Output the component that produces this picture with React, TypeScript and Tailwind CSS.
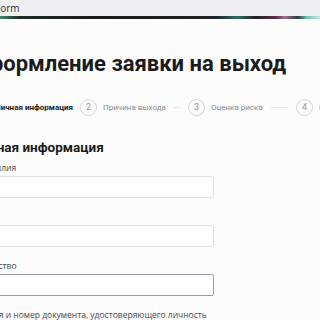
import React from "react";

const steps = [
  { n: "1", label: "Личная информация", active: true },
  { n: "2", label: "Причина выхода" },
  { n: "3", label: "Оценка риска" },
  { n: "4", label: "Решение" },
];

function Field({ label, focused }: { label: string; focused?: boolean }) {
  return (
    <div className="flex flex-col">
      <div className="text-[8.5px] leading-[10px] text-[#4a4a4a] mb-[3px] whitespace-nowrap">{label}</div>
      <div
        className={
          "h-[22px] w-[236px] rounded-[2px] bg-white border " +
          (focused ? "border-[#9c9ca8]" : "border-[#e3e3e3]")
        }
      />
    </div>
  );
}

export default function App() {
  return (
    <div
      className="w-[320px] h-[320px] overflow-hidden bg-[#fcfcfc] text-[#1b1b1b]"
      style={{ fontFamily: '"Open Sans", "Noto Sans", sans-serif' }}
    >
      <div className="h-[16px] bg-[#efeff1] flex items-center overflow-hidden">
        <span className="ml-[-5px] text-[10px] leading-none text-[#333] whitespace-nowrap">Form</span>
      </div>
      <div className="h-[3px] bg-[linear-gradient(90deg,#3e8a74_0%,#1d2a26_6%,#1a1a1a_30%,#20201e_60%,#1c2530_68%,#2b6e63_74%,#222_80%,#5a2a48_86%,#a36c8f_89%,#2c3b3a_93%,#6fc6b8_96%,#c9e2de_100%)]" />
      <div className="ml-[-28px] pt-[32px] flex flex-col">
        <h1
          className="text-[22px] leading-[26px] font-bold whitespace-nowrap"
          style={{ fontFamily: 'Roboto, "Open Sans", sans-serif' }}
        >
          Оформление заявки на выход
        </h1>
        <div
          className="mt-[22px] flex items-center whitespace-nowrap"
          style={{ fontFamily: 'Roboto, "Open Sans", sans-serif' }}
        >
          {steps.map((s) => (
            <div key={s.n} className="w-[108px] shrink-0 flex items-center overflow-hidden">
              <div
                className={
                  "w-[17px] h-[17px] shrink-0 rounded-full border flex items-center justify-center text-[9px] leading-none " +
                  (s.active ? "border-[#1b1b1b] text-[#1b1b1b]" : "border-[#d4d4d4] text-[#9a9a9a]")
                }
              >
                {s.n}
              </div>
              <span
                className={
                  "ml-[6px] shrink-0 text-[8px] leading-[10px] " +
                  (s.active ? "font-bold text-[#1b1b1b]" : "text-[#8a8a8a]")
                }
              >
                {s.label}
              </span>
              <div className="flex-1 h-px mx-2 bg-[#e6e6e6]" />
            </div>
          ))}
        </div>
        <h2
          className="mt-[21px] text-[13.5px] leading-[20px] font-bold whitespace-nowrap"
          style={{ fontFamily: 'Roboto, "Open Sans", sans-serif' }}
        >
          Личная информация
        </h2>
        <div className="mt-[6px] ml-[6px] flex flex-col gap-[14px]">
          <Field label="Фамилия" />
          <Field label="Имя" />
          <Field label="Отчество" focused />
          <Field label="Серия и номер документа, удостоверяющего личность" />
        </div>
      </div>
    </div>
  );
}
